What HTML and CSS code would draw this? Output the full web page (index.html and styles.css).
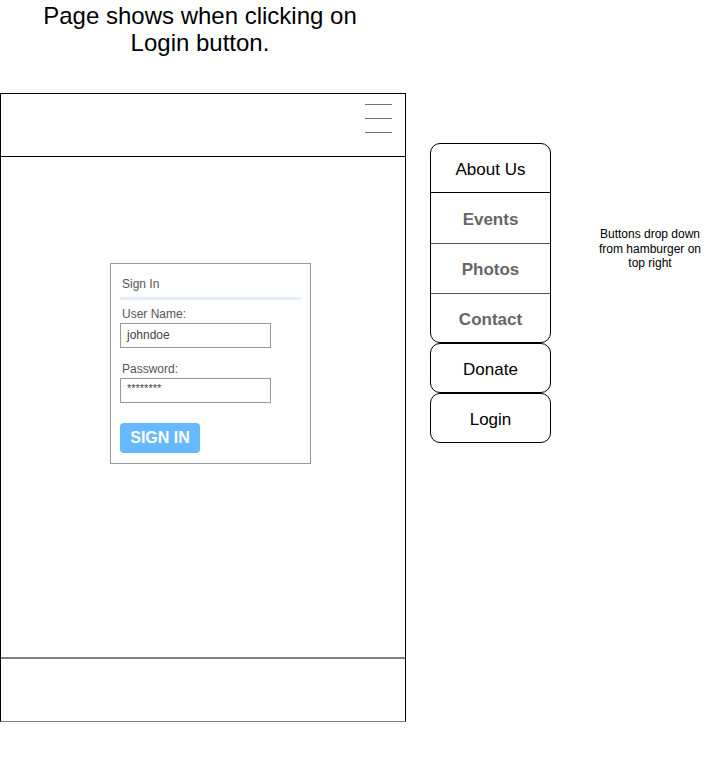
FILE: index.html
```html
<!DOCTYPE html>
<html>
<head>
<meta charset="utf-8">
<link rel="stylesheet" href="styles.css">
</head>
<body>
<div class="canvas">
  <h1 class="title">Page shows when clicking on<br>Login button.</h1>

  <div class="phone">
    <header class="phone-header">
      <div class="hamburger"><span></span><span></span><span></span></div>
    </header>
    <main class="phone-body">
      <form class="login">
        <div class="login-title">Sign In</div>
        <label class="lbl">User Name:</label>
        <div class="field">johndoe</div>
        <label class="lbl lbl-pw">Password:</label>
        <div class="field field-pw">********</div>
        <div class="btn">SIGN IN</div>
      </form>
    </main>
    <footer class="phone-footer"></footer>
  </div>

  <nav class="menu">
    <div class="menu-group">
      <div class="item item-dark">About Us</div>
      <div class="item item-gray">Events</div>
      <div class="item item-gray">Photos</div>
      <div class="item item-gray">Contact</div>
    </div>
    <div class="item single">Donate</div>
    <div class="item single">Login</div>
  </nav>

  <p class="note">Buttons drop down<br>from hamburger on<br>top right</p>
</div>
</body>
</html>
```

FILE: styles.css
```css
html, body {
  margin: 0;
  padding: 0;
  background: #ffffff;
  font-family: "Liberation Sans", Arial, Helvetica, sans-serif;
  color: #000;
}

.canvas {
  position: relative;
  width: 711px;
  height: 772px;
}

.title {
  position: absolute;
  left: 0;
  top: 2px;
  width: 400px;
  margin: 0;
  text-align: center;
  font-size: 24px;
  font-weight: normal;
  line-height: 27px;
}

.phone {
  position: absolute;
  left: 0;
  top: 93px;
  width: 404px;
  height: 627px;
  border: 1px solid #000;
  border-bottom-color: #808080;
  display: flex;
  flex-direction: column;
}

.phone-header {
  border-bottom: 1px solid #000;
  display: flex;
  justify-content: flex-end;
  padding: 10px 13px 0 0;
  box-sizing: border-box;
  height: 63px;
}

.hamburger {
  display: flex;
  flex-direction: column;
  gap: 13px;
  width: 27px;
}

.hamburger span {
  display: block;
  height: 1px;
  background: #707070;
}

.phone-body {
  flex: 1;
  padding: 106px 0 0 109px;
  box-sizing: border-box;
}

.phone-footer {
  height: 62px;
  border-top: 2px solid #808080;
}

.login {
  width: 201px;
  height: 201px;
  border: 1px solid #999;
  box-sizing: border-box;
  padding: 13px 9px 0 9px;
  display: flex;
  flex-direction: column;
  align-items: flex-start;
  color: #555;
}

.login-title {
  font-size: 12px;
  line-height: 14px;
  width: 181px;
  padding-left: 2px;
  padding-bottom: 6px;
  border-bottom: 3px solid #e3efff;
  box-sizing: border-box;
}

.lbl {
  font-size: 12px;
  line-height: 14px;
  margin: 7px 0 2px 2px;
}

.lbl-pw {
  margin-top: 14px;
}

.field {
  width: 151px;
  height: 25px;
  border: 1px solid #999;
  box-sizing: border-box;
  font-size: 12px;
  line-height: 23px;
  padding-left: 6px;
  color: #444;
}

.field-pw {
  font-size: 11px;
  line-height: 18px;
}

.btn {
  margin-top: 20px;
  width: 80px;
  height: 30px;
  border-radius: 4px;
  background: #66b8ff;
  color: #fff;
  font-weight: bold;
  font-size: 16px;
  line-height: 30px;
  text-align: center;
}

.menu {
  position: absolute;
  left: 430px;
  top: 143px;
  width: 121px;
  display: flex;
  flex-direction: column;
}

.menu-group {
  border: 1px solid #000;
  border-radius: 10px;
  overflow: hidden;
  display: flex;
  flex-direction: column;
}

.menu-group .item {
  height: 50px;
  border-top: 1px solid #555;
}

.menu-group .item:first-child {
  border-top: none;
  border-bottom: 1px solid #000;
  height: 49px;
}

.menu-group .item:nth-child(2) {
  border-top: none;
}

.item {
  display: flex;
  align-items: center;
  justify-content: center;
  font-size: 17px;
  padding-top: 3px;
  box-sizing: border-box;
}

.item-dark {
  color: #000;
}

.item-gray {
  color: #666;
  font-weight: bold;
}

.menu-group .item:last-child {
  height: 49px;
}

.single {
  height: 50px;
  border: 1px solid #000;
  border-radius: 10px;
  color: #000;
}

.note {
  position: absolute;
  left: 590px;
  top: 227px;
  width: 120px;
  margin: 0;
  text-align: center;
  font-size: 12px;
  line-height: 14.5px;
}
```
